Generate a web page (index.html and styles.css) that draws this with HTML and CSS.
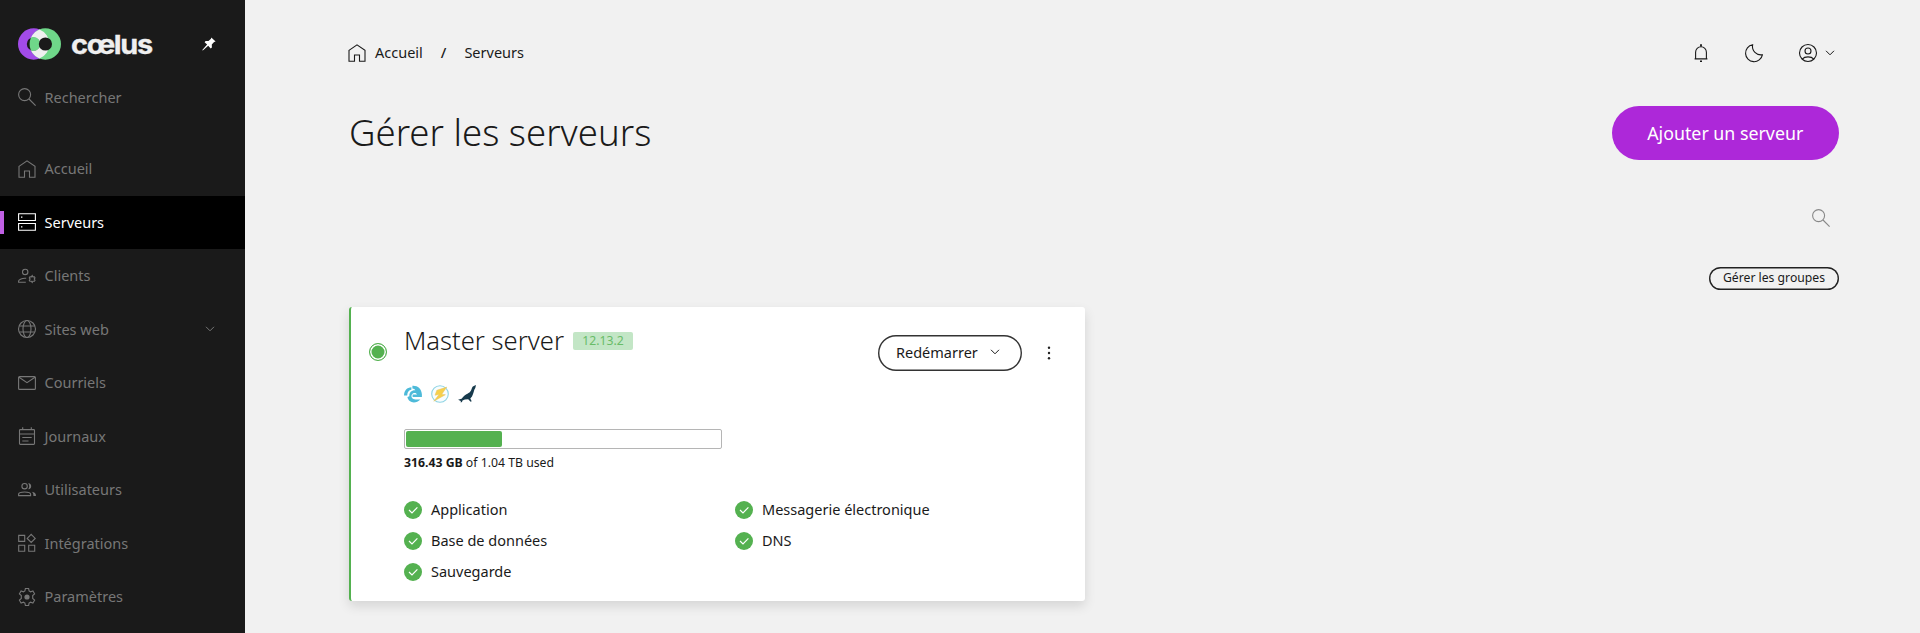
FILE: index.html
```html
<!DOCTYPE html>
<html lang="fr">
<head>
<meta charset="utf-8">
<title>Gérer les serveurs</title>
<link rel="stylesheet" href="styles.css">
</head>
<body>
<svg class="sprite" width="0" height="0" aria-hidden="true">
  <symbol id="home" viewBox="0 0 18 18"><path d="M1 6.4 9 .8l8 5.6v10.9h-5.5V11h-5v6.3H1z"/></symbol>
  <symbol id="search" viewBox="0 0 18 18"><circle cx="6.6" cy="6.6" r="6"/><path d="m11 11 6.6 6.6"/></symbol>
  <symbol id="chevron" viewBox="0 0 10 6"><path d="m1 .8 4 4 4-4"/></symbol>
  <symbol id="check" viewBox="0 0 18 18"><circle cx="9" cy="9" r="9" fill="#54b150" stroke="none"/><path d="m5 9 3 3 5.4-5.7" stroke="#fff" stroke-width="1.2"/></symbol>
</svg>
<div class="app">
  <aside class="sidebar">
    <div class="brand">
      <svg class="rings" viewBox="0 0 43 32">
        <clipPath id="right-disc"><circle cx="27.3" cy="16" r="15.7"/></clipPath>
        <circle cx="15.7" cy="16" r="15.7" fill="#a24be8"/>
        <circle cx="27.3" cy="16" r="15.7" fill="#6fd789"/>
        <path d="M21.5 1.4a15.7 15.7 0 0 1 0 29.2 15.7 15.7 0 0 1 0-29.2z" fill="#efefef"/>
        <circle cx="15.4" cy="16" r="6.6" fill="#1a1a1a"/>
        <circle cx="15.4" cy="16" r="6.9" fill="#6fd789" clip-path="url(#right-disc)"/>
        <circle cx="27.4" cy="16" r="6.6" fill="#1a1a1a"/>
      </svg>
      <span class="wordmark">cœlus</span>
      <svg class="pin" viewBox="0 0 14 14"><path d="M9.3.5 13.6 4.6 12.1 5 9.8 7.6l.1 3-1.2.8-2.5-2.7L.8 13.6.3 13.1 5.1 7.6 2.6 5.2l1-1.1 2.9 0L9 1.8z" fill="#fff" stroke="none"/></svg>
    </div>
    <div class="nav-search"><svg><use href="#search"/></svg><span>Rechercher</span></div>
    <nav class="nav">
      <a class="item"><svg><use href="#home"/></svg><span>Accueil</span></a>
      <a class="item active"><svg viewBox="0 0 18 18"><path d="M.6.7h16.8v6.8H.6zM.6 10.5h16.8v6.8H.6z"/><path d="M3 4.1h1.4M3 13.9h1.4" stroke-width="1.4"/></svg><span>Serveurs</span></a>
      <a class="item"><svg viewBox="0 0 18 18"><circle cx="7.2" cy="4.9" r="2.7"/><path d="M8.2 11.3C4.5 10.8.6 12.5.6 14v1.3h7.2"/><path d="m14.2 8.6.7 1.3 1.5-.1.6 1.1-.8 1.1.8 1.2-.6 1.1-1.5-.1-.7 1.3-.8-1.3-1.5.1-.6-1.1.8-1.2-.8-1.1.6-1.1 1.5.1z"/></svg><span>Clients</span></a>
      <a class="item"><svg viewBox="0 0 18 18"><circle cx="9" cy="9" r="8.5"/><ellipse cx="9" cy="9" rx="4" ry="8.5"/><path d="M1.2 6h15.6M1.2 12h15.6"/></svg><span>Sites web</span><svg class="chev"><use href="#chevron"/></svg></a>
      <a class="item"><svg viewBox="0 0 18 18"><rect x=".6" y="2.6" width="16.8" height="12.8" rx="1"/><path d="m1 3.2 8 5.4 8-5.4"/></svg><span>Courriels</span></a>
      <a class="item"><svg viewBox="0 0 18 18"><rect x="1.5" y="2.6" width="15" height="14.8" rx=".8"/><path d="M1.5 7h15M4.7.2v2.4M13.3.2v2.4M4.3 10.5h9.4M4.3 14h6.2"/></svg><span>Journaux</span></a>
      <a class="item"><svg viewBox="0 0 18 18"><circle cx="6.6" cy="5.2" r="2.7"/><path d="M.6 14.6v-1.3c0-3 12-3 12 0v1.3z"/><path d="M10.2 2.2c4-.5 4 6.4 0 6 1.4-1.8 1.4-4.2 0-6zM13.7 10.8c3 .5 4.3 1.5 4.3 4.3h-2.6c.1-2-.3-3.2-1.7-4.3z" fill="currentColor" stroke="none"/></svg><span>Utilisateurs</span></a>
      <a class="item"><svg viewBox="0 0 18 18"><path d="M.7 1.4h6v6h-6zM.7 11.2h6v6h-6zM10.7 11.2h6v6h-6zM13.2.4l4 4-4 4-4-4z"/></svg><span>Intégrations</span></a>
      <a class="item"><svg viewBox="0 0 18 18"><path d="M7.4.5h3.2l.5 2.4 1.5.9 2.3-.8L16.6 5.8l-1.9 1.7v3l1.9 1.7-1.7 2.8-2.3-.8-1.5.9-.5 2.4H7.4l-.5-2.4-1.5-.9-2.3.8-1.7-2.8 1.9-1.7v-3L1.4 5.8 3.1 3l2.3.8 1.5-.9z"/><circle cx="9" cy="9" r="2.6" fill="currentColor" stroke="none"/></svg><span>Paramètres</span></a>
    </nav>
  </aside>
  <main class="main">
    <header class="topbar">
      <svg><use href="#home"/></svg><span class="crumb">Accueil</span><span class="sep">/</span><span>Serveurs</span>
      <div class="tools">
        <svg viewBox="0 0 18 18"><path d="M3.6 14.8V8.2a5.4 5.4 0 0 1 10.8 0v6.6M2.6 14.9h12.8M9 2.8V.4"/><path d="M8 17.2h2M9 .2v2" stroke-width="1.6"/></svg>
        <svg viewBox="0 0 18 18"><path d="M7.6.8A8.5 8.5 0 1 0 17.4 10.8 8.6 8.6 0 0 1 7.6.8z"/></svg>
        <div class="user"><svg viewBox="0 0 18 18"><circle cx="9" cy="9" r="8.5"/><circle cx="9" cy="7" r="3"/><path d="M3.2 15.1c2.6-3 9-3 11.6 0"/></svg><svg class="chev"><use href="#chevron"/></svg></div>
      </div>
    </header>
    <div class="heading"><h1>Gérer les serveurs</h1><button class="primary">Ajouter un serveur</button></div>
    <div class="filter"><svg><use href="#search"/></svg></div>
    <div class="groups"><button class="small">Gérer les groupes</button></div>
    <section class="card">
      <span class="status"></span>
      <div class="content">
        <div class="top">
          <div class="title"><h2>Master server</h2><span class="badge">12.13.2</span></div>
          <button class="restart">Redémarrer<svg class="chev"><use href="#chevron"/></svg></button>
          <svg class="dots" viewBox="0 0 4 14"><circle cx="2" cy="1.7" r="1.2"/><circle cx="2" cy="7" r="1.2"/><circle cx="2" cy="12.3" r="1.2"/></svg>
        </div>
        <div class="stack">
          <svg viewBox="0 0 18 18"><path d="M0 10.4C.2 5.4 3 2.4 7.4 2.2V4.8C4.8 5.2 3.4 7 3.2 10.4zM8.4.8C13.6.4 17.6 4 17.9 9.2V11.9H8.6V9.6H13C12.6 7.6 9.6 7.2 8 9.2 6.4 11.6 8.4 14.4 11.6 14.4H16.4C11.6 19.4 4.4 17.8 3.4 12L5.4 11.2C5 7.4 8 5 11.4 5.4 10.6 4 9.8 3.5 8.4 3.4z" fill="#4dbad9" stroke="none"/></svg>
          <svg viewBox="0 0 18 18"><circle cx="9" cy="9" r="8.3" stroke="#8fd4e4" stroke-width="1.1" fill="#f8fdfe"/><path d="M15.8 2.1 5.8 5.3 4 10.2l4-.6-5.2 6.6 11.6-6.5-3.6-.5z" fill="#f7d04b" stroke="#e3c46c" stroke-width=".5"/></svg>
          <svg viewBox="0 0 18 18"><path d="m18 0-.7 3.1c-1.7 2.2-1.5 5.4-3.3 8.3l-1.7 2 1.4 2.8-1.1.6-2.4-2.5-3.3.3-2.4.8-.5 1.7-1.3.3.1-1.4L.1 14.8l2.5-.7c1.5-.1 2.2-2.1 3.7-3.3 2.7-2.1 6.2-2.8 7.2-6.5.6-2 1.4-3.2 2.8-3.5z" fill="#173a4c" stroke="none"/></svg>
        </div>
        <div class="meter"><div class="fill"></div></div>
        <p class="usage"><b>316.43 GB</b> of 1.04 TB used</p>
        <div class="services">
          <div><svg><use href="#check"/></svg><span>Application</span></div>
          <div><svg><use href="#check"/></svg><span>Messagerie électronique</span></div>
          <div><svg><use href="#check"/></svg><span>Base de données</span></div>
          <div><svg><use href="#check"/></svg><span>DNS</span></div>
          <div><svg><use href="#check"/></svg><span>Sauvegarde</span></div>
        </div>
      </div>
    </section>
  </main>
</div>
</body>
</html>
```
FILE: styles.css
```css
* { box-sizing: border-box; }
body { margin: 0; background: #f1f1f1; color: #1a1a1a; font: 14.5px/20px "Noto Sans", sans-serif; overflow: hidden; }
svg { width: 18px; height: 18px; flex: none; fill: none; stroke: currentColor; stroke-width: 1.1; overflow: visible; }
.sprite { position: absolute; width: 0; height: 0; }
button { font: inherit; color: inherit; padding: 0; border: 0; background: none; }
h1, h2, p { margin: 0; font-weight: 300; }
.app { display: flex; height: 633px; }
svg.chev { width: 10px; height: 6px; stroke-width: 1; }

.sidebar { width: 245px; flex: none; background: #1a1a1a; color: #777; }
.brand { display: flex; align-items: center; height: 60px; padding: 28px 29px 0 18px; }
.brand .rings { width: 43px; height: 32px; stroke: none; }
.wordmark { font: 700 26px/32px Inter, sans-serif; color: #efefef; margin: 1px 0 0 10px; letter-spacing: -1.2px; transform: scaleX(1.11); transform-origin: left; -webkit-text-stroke: .3px #efefef; }
.brand .pin { width: 14px; height: 14px; margin-left: auto; }
.nav-search { display: flex; align-items: center; gap: 9px; padding-left: 17.5px; height: 20px; margin: 27px 0 35px; }
.item { display: flex; align-items: center; gap: 9px; height: 53.5px; padding: 0 30.5px 0 17.5px; }
.item span, .nav-search span, .services span { padding-bottom: 1px; }
.item .chev { margin-left: auto; }
.item.active { background: #000; color: #fff; border-left: 4px solid #b95ee0; padding-left: 13.5px; border-image: linear-gradient(transparent 30%, #c060e4 30%, #c060e4 71%, transparent 71%) 1 4; }

.main { flex: 1; padding: 43px 81px 0 104px; }
.topbar { display: flex; align-items: center; height: 20px; }
.topbar > svg { margin-left: -1px; }
.topbar > span { padding-bottom: 2px; }
.crumb { margin-left: 9px; }
.sep { margin: 0 18px; font-weight: 500; }
.tools { display: flex; gap: 35.5px; margin-left: auto; padding-right: 4px; }
.user { display: flex; align-items: center; gap: 8.5px; }
.heading { display: flex; align-items: center; justify-content: space-between; height: 54px; margin-top: 43px; }
h1 { font-size: 36.6px; line-height: 52px; padding-bottom: 2px; }
.primary { width: 227.5px; height: 54px; border-radius: 27px; background: #ad28d9; color: #fff; font-size: 17.8px; padding-bottom: 1px; }
.filter { display: flex; justify-content: flex-end; margin-top: 49px; padding-right: 9px; color: #888; }
.groups { display: flex; justify-content: flex-end; margin-top: 40px; }
.small { width: 130px; height: 23px; box-shadow: inset 0 0 0 1.4px #222; border-radius: 12px; font-size: 12.2px; line-height: 20px; padding-bottom: 1px; }

.card { display: flex; width: 736px; height: 294px; margin-top: 17px; padding: 0 34px 0 17.5px; background: #fff; border-left: 2px solid #54b150; border-radius: 3px; box-shadow: 0 5px 12px rgba(0,0,0,.12); }
.status { width: 18px; height: 18px; flex: none; margin-top: 35.5px; border-radius: 50%; background: #54b150; border: 1px solid #54b150; box-shadow: inset 0 0 0 1.5px #fff; }
.content { flex: 1; margin-left: 17.5px; padding-top: 18px; }
.top { display: flex; align-items: flex-start; height: 50px; }
.title { display: flex; align-items: center; flex: 1; height: 32px; }
h2 { font-size: 25.6px; line-height: 31px; padding-bottom: 1px; }
.badge { width: 60px; height: 18px; margin-left: 9px; border-radius: 2px; background: #c3e6c6; color: #69bc68; text-align: center; font-size: 12.2px; line-height: 18px; }
.restart { display: flex; align-items: center; justify-content: space-between; width: 144.5px; height: 36px; margin: 10px 25px 0 0; padding: 0 22px 2px 18.5px; box-shadow: inset 0 0 0 1.4px #333; border-radius: 18px; }
.top .dots { width: 4px; height: 14px; margin-top: 20.5px; fill: #222; stroke: none; }
.stack { display: flex; gap: 9px; margin-top: 10px; }
.meter { width: 318px; height: 20px; margin-top: 26px; padding: 1px; border: 1px solid #b5b5b5; border-radius: 2px; }
.fill { width: 96px; height: 16px; background: #54b150; border-radius: 2px; }
.usage { font-size: 12.25px; font-weight: 400; line-height: 18px; margin-top: 5px; }
.services { display: grid; grid-template-columns: 331px 1fr; grid-auto-rows: 31px; margin-top: 22px; }
.services div { display: flex; align-items: center; gap: 9px; }
```
